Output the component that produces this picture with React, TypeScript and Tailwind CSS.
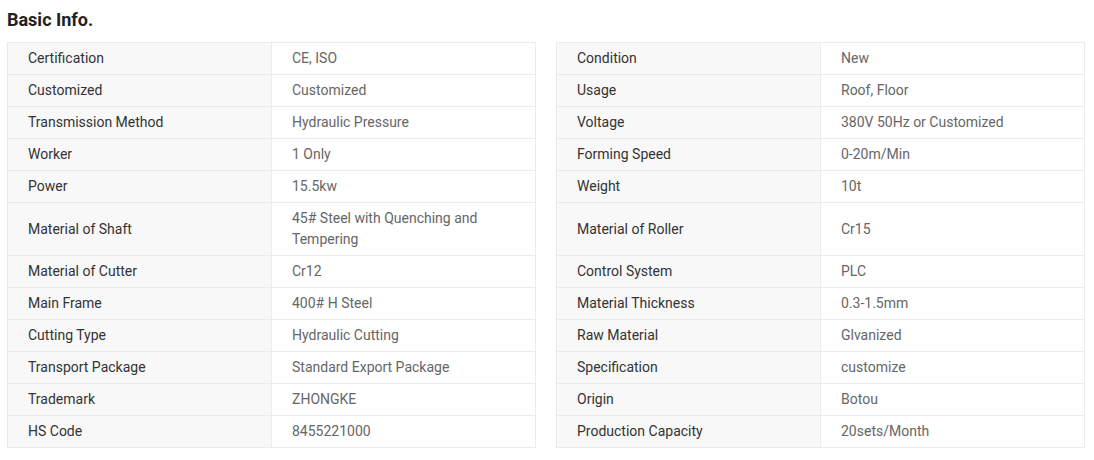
const left: [string, string][] = [
  ["Certification", "CE, ISO"],
  ["Customized", "Customized"],
  ["Transmission Method", "Hydraulic Pressure"],
  ["Worker", "1 Only"],
  ["Power", "15.5kw"],
  ["Material of Shaft", "45# Steel with Quenching and Tempering"],
  ["Material of Cutter", "Cr12"],
  ["Main Frame", "400# H Steel"],
  ["Cutting Type", "Hydraulic Cutting"],
  ["Transport Package", "Standard Export Package"],
  ["Trademark", "ZHONGKE"],
  ["HS Code", "8455221000"],
]

const right: [string, string][] = [
  ["Condition", "New"],
  ["Usage", "Roof, Floor"],
  ["Voltage", "380V 50Hz or Customized"],
  ["Forming Speed", "0-20m/Min"],
  ["Weight", "10t"],
  ["Material of Roller", "Cr15"],
  ["Control System", "PLC"],
  ["Material Thickness", "0.3-1.5mm"],
  ["Raw Material", "Glvanized"],
  ["Specification", "customize"],
  ["Origin", "Botou"],
  ["Production Capacity", "20sets/Month"],
]

function Cells({ label, value, first }: { label: string; value: string; first: boolean }) {
  return (
    <div
      className={
        first
          ? "w-[529px] flex border border-[#ebebeb]"
          : "w-[529px] flex border-x border-b border-[#ebebeb]"
      }
    >
      <div className="w-[264px] shrink-0 flex items-center bg-[#f8f8f8] border-r border-[#ebebeb] pl-[20px] pr-[10px] py-[5px] text-[#333]">
        {label}
      </div>
      <div className="flex-1 flex items-center pl-[20px] pr-[40px] py-[5px] text-[#666]">{value}</div>
    </div>
  )
}

export default function App() {
  return (
    <div className="w-[1094px] h-[460px] bg-white px-[7px] pt-[9px] font-['Roboto',sans-serif] text-[14px] leading-[21px]">
      <h2 className="text-[18px] leading-[21px] font-bold text-[#222] mb-[12px]">Basic Info.</h2>
      <div className="flex flex-col">
        {left.map((row, i) => (
          <div key={i} className="flex gap-[20px]">
            <Cells label={row[0]} value={row[1]} first={i === 0} />
            <Cells label={right[i][0]} value={right[i][1]} first={i === 0} />
          </div>
        ))}
      </div>
    </div>
  )
}
